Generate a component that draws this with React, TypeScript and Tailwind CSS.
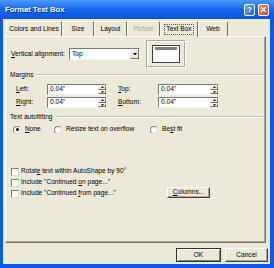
import React from 'react';

const Tri = ({ up, size = 5 }: { up?: boolean; size?: number }) => (
  <svg width={size} height={size / 2 + 0.5} viewBox="0 0 6 3.5">
    <path d={up ? 'M3 0L6 3.5H0z' : 'M0 0h6L3 3.5z'} fill="#000" />
  </svg>
);

const SpinBox = ({ value, width }: { value: string; width: string }) => (
  <div className={`flex h-[11px] ${width} bg-white border border-t-[#7a7a7a] border-l-[#7a7a7a] border-b-[#f4f3ee] border-r-[#f4f3ee]`}>
    <span className="flex-1 pl-[2px] flex items-center leading-none">{value}</span>
    <div className="flex flex-col w-[8px]">
      <div className="h-[4.5px] flex items-center justify-center bg-[#ece9d8] border-[0.5px] border-t-white border-l-white border-b-[#716f64] border-r-[#716f64]">
        <Tri up size={3} />
      </div>
      <div className="h-[4.5px] flex items-center justify-center bg-[#ece9d8] border-[0.5px] border-t-white border-l-white border-b-[#716f64] border-r-[#716f64]">
        <Tri size={3} />
      </div>
    </div>
  </div>
);

const Header = ({ children }: { children: React.ReactNode }) => (
  <div className="flex items-center h-[8px] pl-[4px] pr-[2px]">
    <span className="leading-none">{children}</span>
    <div className="flex-1 ml-[3px] h-0 border-t border-t-[#c5c2b2] border-b border-b-white" />
  </div>
);

const Radio = ({ checked }: { checked?: boolean }) => (
  <span className="w-[8px] h-[8px] mr-[4px] rounded-full bg-white border border-t-[#808080] border-l-[#808080] border-b-[#dcdcd0] border-r-[#dcdcd0] flex items-center justify-center">
    {checked && <span className="w-[3px] h-[3px] rounded-full bg-black" />}
  </span>
);

const Check = ({ children }: { children: React.ReactNode }) => (
  <div className="flex items-center h-[9px]">
    <span className="w-[8px] h-[8px] mr-[2px] bg-white border border-t-[#808080] border-l-[#808080] border-b-[#dcdcd0] border-r-[#dcdcd0]" />
    <span className="leading-none">{children}</span>
  </div>
);

const tabs = [
  { label: 'Colors and Lines', w: 'w-[56px]' },
  { label: 'Size', w: 'w-[32px]' },
  { label: 'Layout', w: 'w-[33px]' },
  { label: 'Picture', w: 'w-[33px]', disabled: true },
  { label: 'Text Box', w: 'w-[38px]', active: true },
  { label: 'Web', w: 'w-[30px]' },
];

export default function App() {
  return (
    <div className="w-[274px] h-[268px] flex flex-col bg-[#0c5ae8] font-['Liberation_Sans',Arial,sans-serif] text-[6.6px] text-black overflow-hidden">
      {/* title bar */}
      <div className="h-[19px] flex items-center justify-between bg-linear-to-b from-[#4a98f8] via-[#1466ee] to-[#0a55e0]">
        <span className="pl-[5px] text-white font-bold text-[7.6px] leading-none [text-shadow:1px_1px_0_#0a2a8a]">Format Text Box</span>
        <div className="flex gap-[3px] mr-[5px]">
          <div className="w-[11px] h-[12px] rounded-[2px] border border-white bg-linear-to-br from-[#6aa6fa] to-[#2466ea] flex items-center justify-center text-white font-bold text-[8px] leading-none">?</div>
          <div className="w-[11px] h-[12px] rounded-[2px] border border-white bg-linear-to-br from-[#f0865e] to-[#d8411c] flex items-center justify-center">
            <svg width="7" height="7" viewBox="0 0 7 7">
              <path d="M1 1L6 6M6 1L1 6" stroke="#fff" strokeWidth="1.4" />
            </svg>
          </div>
        </div>
      </div>

      {/* body */}
      <div className="flex-1 ml-[3px] mr-[4px] mb-[4px] bg-[#ece9d8] flex flex-col">
        {/* tabs */}
        <div className="relative z-10 flex h-[15px] mt-[2px] ml-[3px]">
          {tabs.map((t) => (
            <div
              key={t.label}
              className={`${t.w} ${t.active ? 'h-[16px] bg-[#ece9d8]' : 'h-[15px]'} flex items-center justify-center border-t border-l border-t-white border-l-white border-r border-r-[#716f64] rounded-t-[2px] ${t.disabled ? 'text-[#aca899]' : ''}`}
            >
              {t.active ? (
                <span className="px-[1px] py-[1px] border border-dotted border-[#555] leading-none">{t.label}</span>
              ) : (
                <span className="leading-none">{t.label}</span>
              )}
            </div>
          ))}
        </div>

        {/* panel */}
        <div className="ml-[2px] mr-[4px] h-[207px] border border-t-white border-l-white border-b-[#716f64] border-r-[#716f64] shadow-[inset_-1px_-1px_0_#aca899] flex flex-col">
          <div className="flex items-start mt-[3px] pl-[5px]">
            <div className="flex items-center mt-[8px] h-[12px]">
              <span className="w-[58px] leading-none">
                <u>V</u>ertical alignment:
              </span>
              <div className="w-[71px] h-[12px] flex bg-white border border-t-[#7a7a7a] border-l-[#7a7a7a] border-b-[#f4f3ee] border-r-[#f4f3ee]">
                <span className="flex-1 pl-[2px] flex items-center leading-none">Top</span>
                <div className="w-[9px] flex items-center justify-center bg-[#ece9d8] border border-t-white border-l-white border-b-[#716f64] border-r-[#716f64]">
                  <Tri size={4} />
                </div>
              </div>
            </div>
            <div className="ml-[6px] w-[40px] h-[28px] border border-t-[#aca899] border-l-[#aca899] border-b-white border-r-white shadow-[inset_1px_1px_0_#fff,_inset_-1px_-1px_0_#aca899] flex items-center justify-center">
              <div className="w-[28px] h-[18px] bg-white border border-[#404040] flex flex-col">
                <div className="mx-[2px] mt-[1px] h-[3px] bg-[#808080]" />
              </div>
            </div>
          </div>

          <div className="mt-[3px]">
            <Header>Margins</Header>
          </div>

          <div className="mt-[5px] pl-[10px] flex items-center h-[11px]">
            <span className="w-[31px] leading-none">
              <u>L</u>eft:
            </span>
            <SpinBox value={'0.04"'} width="w-[60px]" />
            <span className="ml-[11px] w-[40px] leading-none">
              <u>T</u>op:
            </span>
            <SpinBox value={'0.04"'} width="w-[61px]" />
          </div>
          <div className="mt-[2px] pl-[10px] flex items-center h-[11px]">
            <span className="w-[31px] leading-none">
              <u>R</u>ight:
            </span>
            <SpinBox value={'0.04"'} width="w-[60px]" />
            <span className="ml-[11px] w-[40px] leading-none">
              <u>B</u>ottom:
            </span>
            <SpinBox value={'0.04"'} width="w-[61px]" />
          </div>

          <div className="mt-[5px]">
            <Header>Text autofitting</Header>
          </div>

          <div className="mt-[4px] pl-[7px] flex items-center h-[9px]">
            <div className="w-[41px] flex items-center">
              <Radio checked />
              <span className="leading-none">
                <u>N</u>one
              </span>
            </div>
            <div className="w-[96px] flex items-center">
              <Radio />
              <span className="leading-none">Resize text on overflow</span>
            </div>
            <div className="flex items-center">
              <Radio />
              <span className="leading-none">
                Be<u>s</u>t fit
              </span>
            </div>
          </div>

          <div className="mt-[33px] pl-[5px] flex items-end">
            <div className="w-[156px] flex flex-col gap-[2px]">
              <Check>
                Rotat<u>e</u> text within AutoShape by 90°
              </Check>
              <Check>
                Include "Continued <u>o</u>n page..."
              </Check>
              <Check>
                Include "Continued <u>f</u>rom page..."
              </Check>
            </div>
            <div className="w-[43px] h-[11px] flex items-center justify-center bg-[#ece9d8] border border-t-white border-l-white border-b-[#404040] border-r-[#404040] shadow-[inset_-1px_-1px_0_#aca899] leading-none">
              <span>
                <u>C</u>olumns...
              </span>
            </div>
          </div>
        </div>

        {/* buttons */}
        <div className="mt-[5px] mr-[2px] flex justify-end gap-[4px]">
          <div className="w-[45px] h-[14px] flex items-center justify-center border border-[#303030] bg-[#ece9d8] shadow-[inset_1px_1px_0_#fff,_inset_-1px_-1px_0_#808080] leading-none">
            OK
          </div>
          <div className="w-[43px] h-[14px] flex items-center justify-center border border-t-white border-l-white border-b-[#404040] border-r-[#404040] bg-[#ece9d8] shadow-[inset_-1px_-1px_0_#aca899] leading-none">
            Cancel
          </div>
        </div>
      </div>
    </div>
  );
}
